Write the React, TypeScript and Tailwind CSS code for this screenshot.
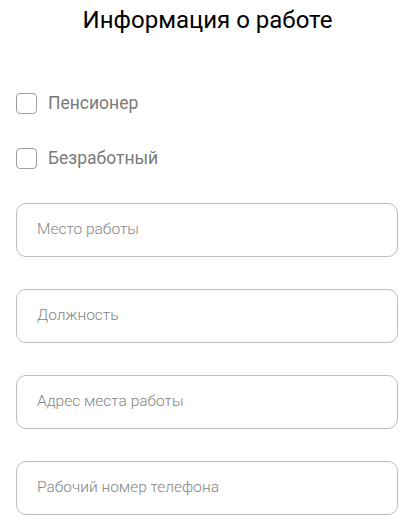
const fields = ['Место работы', 'Должность', 'Адрес места работы', 'Рабочий номер телефона'];
const checks = ['Пенсионер', 'Безработный'];

export default function App() {
  return (
    <div className="w-[415px] h-[532px] bg-white overflow-hidden font-['Roboto',sans-serif]">
      <h1 className="pt-[6px] text-center text-[24px] leading-[28px] text-black font-normal">
        Информация о работе
      </h1>

      <div className="mt-[59px] px-4 flex flex-col gap-[34px]">
        {checks.map((c) => (
          <label key={c} className="flex items-center gap-[11px] h-[21px]">
            <input type="checkbox" className="appearance-none w-[21px] h-[21px] rounded-[4px] border border-[#9e9e9e] bg-white" />
            <span className="text-[17.5px] text-[#7a7a7a]">{c}</span>
          </label>
        ))}
      </div>

      <div className="mt-[34px] px-4 flex flex-col gap-8">
        {fields.map((f) => (
          <input
            key={f}
            placeholder={f}
            className="w-[382px] h-[54px] rounded-[10px] border border-[#bdbdbd] px-5 pb-[2px] text-[15.5px] font-light placeholder:text-[#858585] outline-none"
          />
        ))}
      </div>
    </div>
  );
}
